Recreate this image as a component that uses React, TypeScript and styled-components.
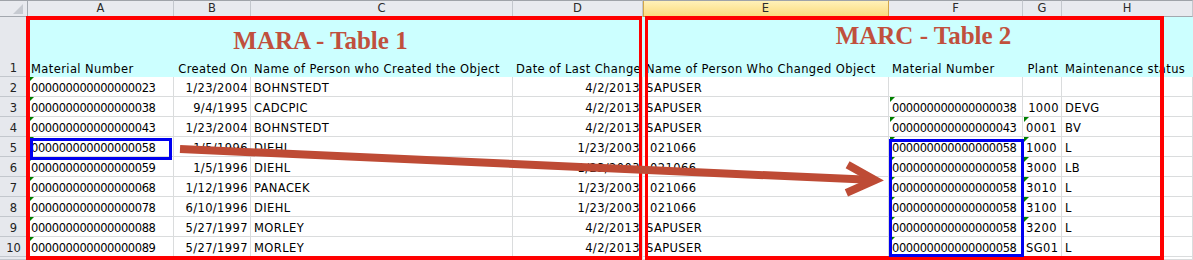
import React from "react";
import styled, { createGlobalStyle, css } from "styled-components";

const GlobalStyle = createGlobalStyle`
  html, body {
    margin: 0;
    padding: 0;
    background: #fff;
    overflow: hidden;
  }
  body {
    font-family: "DejaVu Sans", Verdana, sans-serif;
  }
`;

const LEFT_COLS = [146, 77, 262, 130];
const RIGHT_COLS = [246, 134, 39, 131];
const ALL_COLS = [...LEFT_COLS, ...RIGHT_COLS];
const px = (list: number[]) => list.map((w) => `${w}px`).join(" ");

const Sheet = styled.div`
  position: relative;
  width: 1193px;
  font-family: "DejaVu Sans", Verdana, sans-serif;
  font-size: 11.5px;
  color: #000;
`;

const Row = styled.div<{ $h?: number }>`
  display: grid;
  grid-template-columns: 28px ${px(ALL_COLS)};
  height: ${(p) => p.$h ?? 20}px;
  overflow: hidden;
`;

const ColHead = styled.div<{ $active?: boolean }>`
  box-sizing: border-box;
  height: 17px;
  border-top: 1px solid #9fa3a9;
  border-right: 1px solid #c3c7cd;
  border-bottom: 1px solid #a3a8af;
  background: #e8eaef;
  display: flex;
  align-items: center;
  justify-content: center;
  line-height: 15px;
  color: #2b2b2b;

  ${(p) =>
    p.$active &&
    css`
      background: linear-gradient(#fff1b8, #fbdb7e);
      box-shadow: inset 1px 0 #d2a64a;
      border-right-color: #d2a64a;
      border-bottom-color: #c99a3c;
    `}
`;

const Corner = styled(ColHead)`
  justify-content: flex-end;
  align-items: flex-end;
  padding: 0 4px 2px 0;
  border-right-color: #a3a8af;

  &::after {
    content: "";
    width: 0;
    height: 0;
    border-left: 10px solid transparent;
    border-bottom: 10px solid #c6cad1;
  }
`;

const RowHead = styled.div`
  box-sizing: border-box;
  border-right: 1px solid #a3a8af;
  border-bottom: 1px solid #c3c7cd;
  background: #e6e8ed;
  display: flex;
  align-items: flex-end;
  justify-content: center;
  line-height: 15px;
  color: #222;
`;

type Align = "left" | "center" | "right";

const textBox = css<{ $align?: Align; $tight?: boolean }>`
  box-sizing: border-box;
  padding: 0 2px 0 3px;
  line-height: 15px;
  display: flex;
  align-items: flex-end;
  justify-content: ${(p) =>
    p.$align === "right" ? "flex-end" : p.$align === "center" ? "center" : "flex-start"};
  white-space: pre;
  letter-spacing: ${(p) => (p.$tight ? "-0.4px" : "0.4px")};
`;

const Cell = styled.div<{ $align?: Align; $tight?: boolean; $flag?: boolean }>`
  ${textBox};
  position: relative;
  border-right: 1px solid #dadcdd;
  border-bottom: 1px solid #dadcdd;

  ${(p) =>
    p.$flag &&
    css`
      &::before {
        content: "";
        position: absolute;
        left: 1px;
        top: 0;
        border-top: 5px solid #008000;
        border-right: 5px solid transparent;
      }
    `}
`;

const Label = styled.div<{ $align?: Align; $tight?: boolean }>`
  ${textBox};
`;

const TitleGroup = styled.div<{ $cols: number[] }>`
  grid-column: span 4;
  display: grid;
  grid-template-columns: ${(p) => px(p.$cols)};
  grid-template-rows: 40px 20px;
  background: #ccffff;
`;

const Title = styled.div<{ $top: number; $shift: number }>`
  grid-column: 1 / -1;
  font-family: "Liberation Serif", "Times New Roman", serif;
  font-weight: bold;
  font-size: 25px;
  line-height: 25px;
  color: #c0503d;
  text-align: center;
  white-space: nowrap;
  padding-top: ${(p) => p.$top}px;
  padding-left: ${(p) => Math.max(p.$shift, 0)}px;
  padding-right: ${(p) => Math.max(-p.$shift, 0)}px;
`;

const Frame = styled.div<{
  $x: number;
  $y: number;
  $w: number;
  $h: number;
  $color: string;
  $b: string;
}>`
  position: absolute;
  box-sizing: border-box;
  left: ${(p) => p.$x}px;
  top: ${(p) => p.$y}px;
  width: ${(p) => p.$w}px;
  height: ${(p) => p.$h}px;
  border-style: solid;
  border-color: ${(p) => p.$color};
  border-width: ${(p) => p.$b};
  pointer-events: none;
`;

const ArrowLayer = styled.svg`
  position: absolute;
  left: 0;
  top: 0;
  pointer-events: none;
`;

type Rec = {
  mat: string;
  created: string;
  by: string;
  changed: string;
  changer: string;
  marc: string;
  plant: string;
  plantNum?: boolean;
  status: string;
};

const rows: Rec[] = [
  { mat: "000000000000000023", created: "1/23/2004", by: "BOHNSTEDT", changed: "4/2/2013", changer: "SAPUSER", marc: "", plant: "", status: "" },
  { mat: "000000000000000038", created: "9/4/1995", by: "CADCPIC", changed: "4/2/2013", changer: "SAPUSER", marc: "000000000000000038", plant: "1000", plantNum: true, status: "DEVG" },
  { mat: "000000000000000043", created: "1/23/2004", by: "BOHNSTEDT", changed: "4/2/2013", changer: "SAPUSER", marc: "000000000000000043", plant: "0001", status: "BV" },
  { mat: "000000000000000058", created: "1/5/1996", by: "DIEHL", changed: "1/23/2003", changer: " 021066", marc: "000000000000000058", plant: "1000", status: "L" },
  { mat: "000000000000000059", created: "1/5/1996", by: "DIEHL", changed: "1/23/2003", changer: " 021066", marc: "000000000000000058", plant: "3000", status: "LB" },
  { mat: "000000000000000068", created: "1/12/1996", by: "PANACEK", changed: "1/23/2003", changer: " 021066", marc: "000000000000000058", plant: "3010", status: "L" },
  { mat: "000000000000000078", created: "6/10/1996", by: "DIEHL", changed: "1/23/2003", changer: " 021066", marc: "000000000000000058", plant: "3100", status: "L" },
  { mat: "000000000000000088", created: "5/27/1997", by: "MORLEY", changed: "4/2/2013", changer: "SAPUSER", marc: "000000000000000058", plant: "3200", status: "L" },
  { mat: "000000000000000089", created: "5/27/1997", by: "MORLEY", changed: "4/2/2013", changer: "SAPUSER", marc: "000000000000000058", plant: "SG01", status: "L" },
];

const letters = ["A", "B", "C", "D", "E", "F", "G", "H"];

export default function App() {
  return (
    <>
      <GlobalStyle />
      <Sheet>
        <Row $h={17}>
          <Corner />
          {letters.map((l) => (
            <ColHead key={l} $active={l === "E"}>
              {l}
            </ColHead>
          ))}
        </Row>

        <Row $h={60}>
          <RowHead>1</RowHead>
          <TitleGroup $cols={LEFT_COLS}>
            <Title $top={11} $shift={-30}>MARA - Table 1</Title>
            <Label>Material Number</Label>
            <Label $align="center">Created On</Label>
            <Label>Name of Person who Created the Object</Label>
            <Label $align="center">Date of Last Change</Label>
          </TitleGroup>
          <TitleGroup $cols={RIGHT_COLS}>
            <Title $top={6} $shift={11}>MARC - Table 2</Title>
            <Label>Name of Person Who Changed Object</Label>
            <Label>Material Number</Label>
            <Label $align="center">Plant</Label>
            <Label>Maintenance status</Label>
          </TitleGroup>
        </Row>

        {rows.map((r, i) => (
          <Row key={i}>
            <RowHead>{i + 2}</RowHead>
            <Cell $tight $flag>{r.mat}</Cell>
            <Cell $align="right">{r.created}</Cell>
            <Cell>{r.by}</Cell>
            <Cell $align="right">{r.changed}</Cell>
            <Cell>{r.changer}</Cell>
            <Cell $tight $flag={!!r.marc}>{r.marc}</Cell>
            <Cell
              $align={r.plantNum ? "right" : "left"}
              $flag={!r.plantNum && /^\d+$/.test(r.plant)}
            >
              {r.plant}
            </Cell>
            <Cell>{r.status}</Cell>
          </Row>
        ))}

        {/* top sliver of row 11, the rest is below the fold */}
        <Row $h={3}>
          <RowHead />
          {letters.map((l) => (
            <Cell key={l} />
          ))}
        </Row>

        <Frame $x={26} $y={16} $w={616} $h={244} $color="#ff0000" $b="4px 3px 4px 4px" />
        <Frame $x={645} $y={16} $w={519} $h={244} $color="#ff0000" $b="4px 4px 4px 3px" />
        <Frame $x={30} $y={138} $w={142} $h={22} $color="#0000f0" $b="3px" />
        <Frame $x={889} $y={139} $w={135} $h={118} $color="#0000f0" $b="3px" />

        <ArrowLayer width="1193" height="260" viewBox="0 0 1193 260">
          <g fill="none" stroke="#be4b35" strokeWidth="8">
            <path d="M180 149 L875 180.1" strokeLinecap="butt" />
            <path
              d="M847.6 164.8 L875 180.1 L846.4 192.8"
              strokeLinecap="butt"
              strokeLinejoin="miter"
            />
          </g>
        </ArrowLayer>
      </Sheet>
    </>
  );
}
